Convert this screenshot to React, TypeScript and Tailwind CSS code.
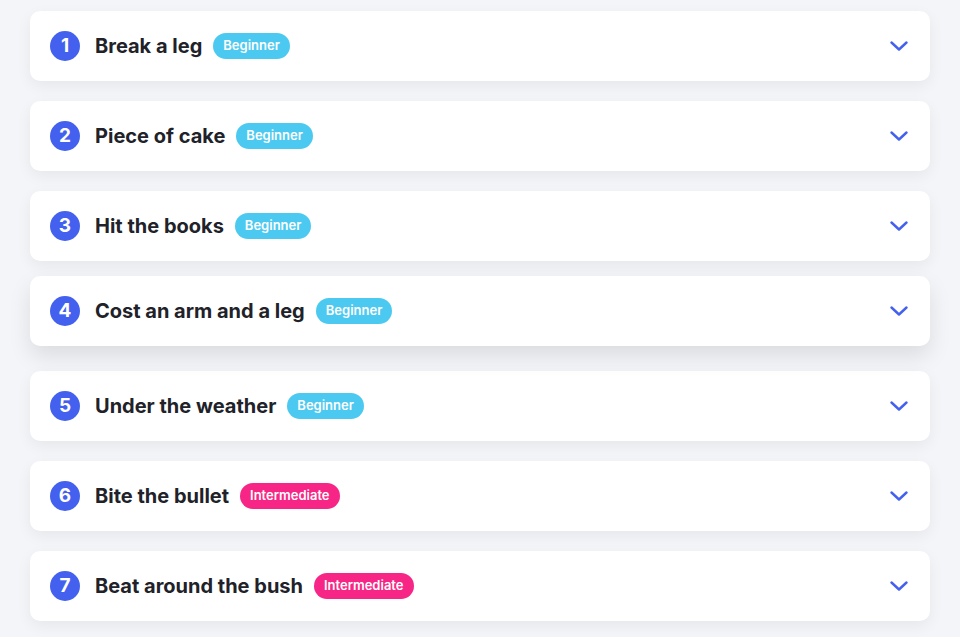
import React from "react";

const items = [
  { n: 1, t: "Break a leg", l: "Beginner" },
  { n: 2, t: "Piece of cake", l: "Beginner" },
  { n: 3, t: "Hit the books", l: "Beginner" },
  { n: 4, t: "Cost an arm and a leg", l: "Beginner", hover: true },
  { n: 5, t: "Under the weather", l: "Beginner" },
  { n: 6, t: "Bite the bullet", l: "Intermediate" },
  { n: 7, t: "Beat around the bush", l: "Intermediate" },
];

export default function App() {
  return (
    <div
      className="min-h-[637px] w-full bg-[#f4f5f8] pt-[11px]"
      style={{ fontFamily: "Inter, 'Noto Sans', sans-serif" }}
    >
      <div className="mx-auto flex w-[900px] flex-col gap-5">
        {items.map((it) => (
          <div
            key={it.n}
            className={
              it.hover
                ? "flex h-[70px] -translate-y-[5px] items-center rounded-[10px] bg-white pl-[20px] pr-[22px] shadow-[0_10px_22px_rgba(0,0,0,0.10)]"
                : "flex h-[70px] items-center rounded-[10px] bg-white pl-[20px] pr-[22px] shadow-[0_5px_15px_rgba(0,0,0,0.06)]"
            }
          >
            <div className="flex h-[30px] w-[30px] items-center justify-center rounded-full bg-[#4361ee] text-[19px] font-bold text-white">
              {it.n}
            </div>
            <div className="ml-[15px] text-[20px] font-bold text-[#212229]">
              {it.t}
            </div>
            <span
              className={
                it.l === "Beginner"
                  ? "ml-[11px] flex h-[26px] items-center rounded-full bg-[#4cc9f0] px-[10px] text-[13px] font-semibold text-white"
                  : "ml-[11px] flex h-[26px] items-center rounded-full bg-[#f72585] px-[10px] text-[13px] font-semibold text-white"
              }
            >
              {it.l}
            </span>
            <div className="ml-auto flex items-center">
              <svg width="18" height="10" viewBox="0 0 18 10" fill="none">
                <polyline
                  points="1.5,1.5 9,8.5 16.5,1.5"
                  stroke="#4361ee"
                  strokeWidth="2.4"
                  strokeLinecap="round"
                  strokeLinejoin="round"
                />
              </svg>
            </div>
          </div>
        ))}
      </div>
    </div>
  );
}
